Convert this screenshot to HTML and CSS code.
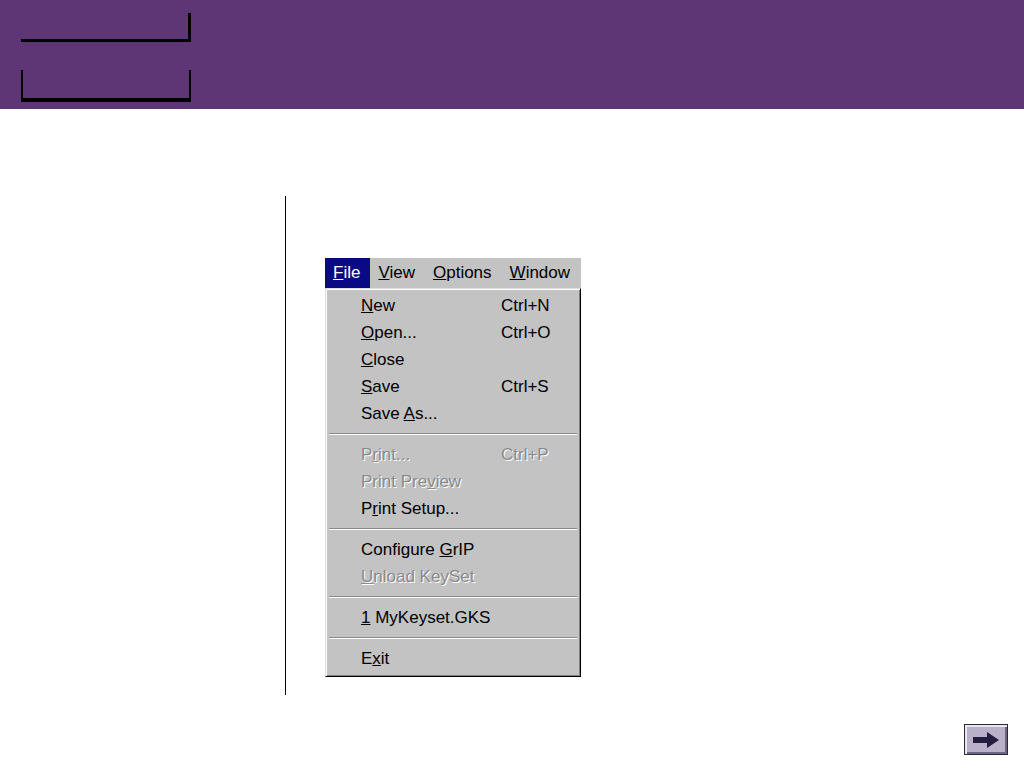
FILE: index.html
```html
<!DOCTYPE html>
<html>
<head>
    <title>GrIP File Menu</title>
    <link rel="stylesheet" href="styles.css">
</head>
<body>
    <div class="header">
        <div class="tab tab-top"></div>
        <div class="tab tab-bottom"></div>
    </div>

    <div class="main">
        <div class="side"></div>
        <div class="content">
            <!-- Menu screenshot -->
            <div class="window-menu">
                <div class="menubar">
                    <span class="menubar-item active"><u>F</u>ile</span>
                    <span class="menubar-item"><u>V</u>iew</span>
                    <span class="menubar-item"><u>O</u>ptions</span>
                    <span class="menubar-item"><u>W</u>indow</span>
                </div>
                <div class="dropdown">
                    <div class="menu-row"><span><u>N</u>ew</span><span>Ctrl+N</span></div>
                    <div class="menu-row"><span><u>O</u>pen...</span><span>Ctrl+O</span></div>
                    <div class="menu-row"><span><u>C</u>lose</span><span></span></div>
                    <div class="menu-row"><span><u>S</u>ave</span><span>Ctrl+S</span></div>
                    <div class="menu-row"><span>Save <u>A</u>s...</span><span></span></div>
                    <div class="menu-sep"></div>
                    <div class="menu-row disabled"><span>P<u>r</u>int...</span><span>Ctrl+P</span></div>
                    <div class="menu-row disabled"><span>Print Pre<u>v</u>iew</span><span></span></div>
                    <div class="menu-row"><span>P<u>r</u>int Setup...</span><span></span></div>
                    <div class="menu-sep"></div>
                    <div class="menu-row"><span>Configure <u>G</u>rIP</span><span></span></div>
                    <div class="menu-row disabled"><span><u>U</u>nload KeySet</span><span></span></div>
                    <div class="menu-sep"></div>
                    <div class="menu-row"><span><u>1</u> MyKeyset.GKS</span><span></span></div>
                    <div class="menu-sep"></div>
                    <div class="menu-row"><span>E<u>x</u>it</span><span></span></div>
                </div>
            </div>
        </div>
    </div>

    <div class="footer">
        <button class="next-btn" title="Next">
            <svg width="28" height="18" viewBox="0 0 28 18">
                <path d="M1 6 H15 V1 L27 9 L15 17 V12 H1 Z" fill="#231d3f"/>
            </svg>
        </button>
    </div>
</body>
</html>
```

FILE: styles.css
```css
body {
    margin: 0;
    padding: 0;
    background: #ffffff;
    font-family: 'Liberation Sans', Arial, sans-serif;
}

.header {
    height: 109px;
    box-sizing: border-box;
    background: #5f3675;
    padding: 13px 0 0 21px;
}

.tab {
    box-sizing: border-box;
    width: 170px;
    border-color: #000;
    border-style: solid;
}

.tab-top {
    height: 29px;
    border-width: 0 3px 3px 0;
}

.tab-bottom {
    height: 32px;
    margin-top: 28px;
    border-width: 0 2px 4px 2px;
}

.main {
    display: flex;
    margin-top: 87px;
}

.side {
    width: 285px;
}

.content {
    height: 499px;
    box-sizing: border-box;
    border-left: 1px solid #000;
    padding: 62px 0 0 39px;
}

.window-menu {
    width: 256px;
    font-size: 17px;
    color: #000;
}

.menubar {
    display: flex;
    height: 30px;
    background: #c3c3c3;
}

.menubar-item {
    padding: 0 10px 0 8px;
    line-height: 30px;
}

.menubar-item.active {
    background: #0a0a84;
    color: #fff;
}

.dropdown {
    background: #c3c3c3;
    border: 1px solid;
    border-color: #dcdcdc #000 #000 #dcdcdc;
    box-shadow: inset 1px 1px #fff, inset -1px -1px #808080;
    padding: 3px 3px 4px 3px;
}

.menu-row {
    display: grid;
    grid-template-columns: 140px 1fr;
    height: 27px;
    line-height: 27px;
    padding-left: 32px;
}

.menu-row.disabled {
    color: #8a8a8a;
    text-shadow: 1px 1px #fff;
}

.menu-sep {
    height: 14px;
    display: flex;
    align-items: center;
}

.menu-sep::before {
    content: "";
    flex: 1;
    border-top: 1px solid #8a8a8a;
    border-bottom: 1px solid #fff;
}

.footer {
    display: flex;
    justify-content: flex-end;
    padding: 29px 16px 0 0;
}

.next-btn {
    width: 44px;
    height: 31px;
    padding: 0;
    display: flex;
    align-items: center;
    justify-content: center;
    background: #b9b1c9;
    border: 1px solid #2c2838;
    box-shadow: inset 2px 2px #ece8f2, inset -2px -2px #6c6584;
    cursor: pointer;
}
```
